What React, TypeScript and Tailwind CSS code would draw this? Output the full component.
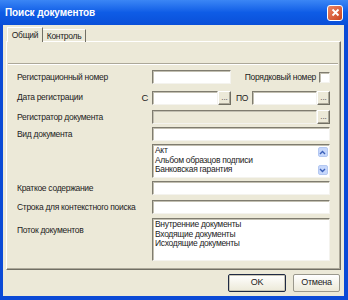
const sunken =
  'border border-t-[#7f7c6f] border-l-[#7f7c6f] border-r-[#f4f3ee] border-b-[#f4f3ee] shadow-[inset_1px_1px_0_#c2bfb1]';
const raised =
  'border border-t-white border-l-white border-r-[#716f64] border-b-[#716f64] shadow-[inset_-1px_-1px_0_#aca899]';

function Field({ w, disabled }: { w: string; disabled?: boolean }) {
  return <div className={`${w} h-[14px] ${sunken} ${disabled ? 'bg-[#ece9d8]' : 'bg-white'}`} />;
}

function Dots() {
  return (
    <div className={`w-[13px] h-[14px] ${raised} bg-[#ece9d8] flex items-end justify-center text-[8px] leading-[8px] pb-[2px] tracking-normal text-[#333]`}>
      ...
    </div>
  );
}

function Row({ label, extra, children, className }: { label?: string; extra?: string; children: React.ReactNode; className?: string }) {
  return (
    <div className={`flex items-center ${className ?? ''}`}>
      <div className="w-[135px] shrink-0 flex justify-between pr-[4px]">
        <span className="whitespace-nowrap">{label}</span>
        {extra && <span className="text-[9.5px]">{extra}</span>}
      </div>
      {children}
    </div>
  );
}

function ScrollBtn({ up }: { up?: boolean }) {
  return (
    <div className="w-[10px] h-[10px] rounded-[2px] bg-[#c6d7fb] border border-[#b4c8f2] flex items-center justify-center">
      <svg width="7" height="5" viewBox="0 0 7 5">
        <path d={up ? 'M1 4 L3.5 1.5 L6 4' : 'M1 1 L3.5 3.5 L6 1'} fill="none" stroke="#3a5fb8" strokeWidth="1.4" />
      </svg>
    </div>
  );
}

export default function App() {
  return (
    <div className="w-[348px] h-[300px] flex flex-col bg-[#0b4ad6] font-['Liberation_Sans',Arial,sans-serif] text-[8.5px] tracking-[-0.3px] text-[#1c1c1c]">
      <div className="h-[25px] shrink-0 flex items-center justify-between pl-[5px] pr-[5px] bg-gradient-to-b from-[#3b86f5] via-[#0e5ce6] to-[#0a4fd8]">
        <span className="text-white font-bold text-[10px] tracking-[-0.1px]">Поиск документов</span>
        <div className="w-[16px] h-[16px] rounded-[3px] border border-white bg-gradient-to-br from-[#ec8463] to-[#c9421c] flex items-center justify-center">
          <svg width="9" height="9" viewBox="0 0 9 9">
            <path d="M1.5 1.5 L7.5 7.5 M7.5 1.5 L1.5 7.5" stroke="white" strokeWidth="1.8" />
          </svg>
        </div>
      </div>
      <div className="flex-1 pl-[3px] pr-[4px] pb-[4px]">
        <div className="h-full bg-[#ece9d8] pt-[2px]">
          <div className="flex items-end pl-[4px] h-[15px] -mb-px relative z-10">
            <div className="h-[15px] w-[36px] bg-[#ece9d8] border-t border-l border-white border-r border-r-[#716f64] flex items-center justify-center">
              Общий
            </div>
            <div className="h-[13px] w-[43px] border-t border-white border-r border-r-[#716f64] flex items-center justify-center">
              Контроль
            </div>
          </div>
          <div className={`mx-[3px] h-[229px] ${raised} flex flex-col pl-[10px]`}>
            <div className="mt-[21px] -ml-[9px] mr-[2px] h-[2px] border-t border-[#aca899] border-b border-b-white" />
            <Row label="Регистрационный номер" className="mt-[5px]">
              <Field w="w-[79px]" />
              <span className="ml-auto">Порядковый номер</span>
              <div className={`ml-[3px] mr-[10px] w-[11px] h-[11px] bg-white ${sunken}`} />
            </Row>
            <Row label="Дата регистрации" extra="С" className="mt-[7px]">
              <Field w="w-[66px]" />
              <Dots />
              <span className="ml-[5px] w-[16px]">ПО</span>
              <Field w="w-[65px]" />
              <Dots />
            </Row>
            <Row label="Регистратор документа" className="mt-[5px]">
              <Field w="w-[165px]" disabled />
              <Dots />
            </Row>
            <Row label="Вид документа" className="mt-[3px]">
              <Field w="w-[178px]" />
            </Row>
            <Row className="mt-[3px]">
              <div className={`w-[178px] h-[34px] bg-white ${sunken} flex`}>
                <div className="flex-1 pl-[2px] pt-[1px] leading-[9.5px]">
                  <div>Акт</div>
                  <div>Альбом образцов подписи</div>
                  <div>Банковская гарантия</div>
                </div>
                <div className="w-[13px] flex flex-col justify-between items-center py-[2px]">
                  <ScrollBtn up />
                  <ScrollBtn />
                </div>
              </div>
            </Row>
            <Row label="Краткое содержание" className="mt-[3px]">
              <Field w="w-[178px]" />
            </Row>
            <Row label="Строка для контекстного поиска" className="mt-[5px]">
              <Field w="w-[178px]" />
            </Row>
            <div className="flex items-start mt-[4px]">
              <div className="w-[135px] shrink-0 pt-[6px]">Поток документов</div>
              <div className={`w-[178px] h-[43px] bg-white ${sunken} pl-[2px] pt-[1px] leading-[9.5px]`}>
                <div>Внутренние документы</div>
                <div>Входящие документы</div>
                <div>Исходящие документы</div>
              </div>
            </div>
          </div>
          <div className="flex justify-end gap-[7px] pr-[4px] mt-[4px]">
            <button className="w-[58px] h-[18px] rounded-[2px] border border-[#1f2a44] bg-gradient-to-b from-white to-[#ece9d8] shadow-[inset_0_0_0_1px_#c9c6b6] text-[9px]">
              OK
            </button>
            <button className="w-[47px] h-[18px] rounded-[2px] border border-[#9a988c] bg-gradient-to-b from-white to-[#ece9d8] text-[9px]">
              Отмена
            </button>
          </div>
        </div>
      </div>
    </div>
  );
}
